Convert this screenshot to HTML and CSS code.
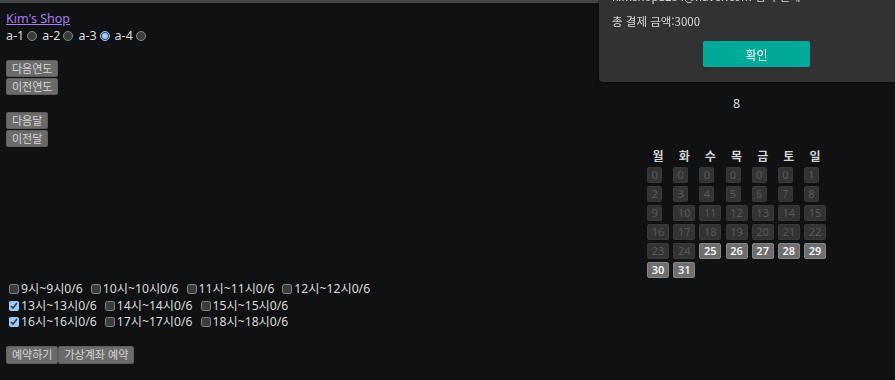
FILE: index.html
```html
<!DOCTYPE html>
<html lang="ko">
<head>
<meta charset="utf-8">
<title>Kim's Shop</title>
<link rel="stylesheet" href="styles.css">
</head>
<body>
<div class="topbar"></div>
<div class="page">
  <div class="left">
    <div class="line"><a class="shop-link" href="#">Kim's Shop</a></div>
    <div class="line radios">
      <label class="radio-item">a-1<input type="radio" name="a"></label>
      <label class="radio-item">a-2<input type="radio" name="a"></label>
      <label class="radio-item">a-3<input type="radio" name="a" checked></label>
      <label class="radio-item">a-4<input type="radio" name="a"></label>
    </div>
    <div class="btn-stack year">
      <button class="btn">다음연도</button>
      <button class="btn">이전연도</button>
    </div>
    <div class="btn-stack month">
      <button class="btn">다음달</button>
      <button class="btn">이전달</button>
    </div>
    <div class="slots">
      <div class="slot-row">
        <label class="slot"><input type="checkbox">9시~9시0/6</label>
        <label class="slot"><input type="checkbox">10시~10시0/6</label>
        <label class="slot"><input type="checkbox">11시~11시0/6</label>
        <label class="slot"><input type="checkbox">12시~12시0/6</label>
      </div>
      <div class="slot-row">
        <label class="slot"><input type="checkbox" checked>13시~13시0/6</label>
        <label class="slot"><input type="checkbox">14시~14시0/6</label>
        <label class="slot"><input type="checkbox">15시~15시0/6</label>
      </div>
      <div class="slot-row">
        <label class="slot"><input type="checkbox" checked>16시~16시0/6</label>
        <label class="slot"><input type="checkbox">17시~17시0/6</label>
        <label class="slot"><input type="checkbox">18시~18시0/6</label>
      </div>
    </div>
    <div class="reserve">
      <button class="btn">예약하기</button><button class="btn">가상계좌 예약</button>
    </div>
  </div>
  <div class="right">
    <div class="month-num">8</div>
    <div class="cal">
      <div class="dow">월</div><div class="dow">화</div><div class="dow">수</div><div class="dow">목</div><div class="dow">금</div><div class="dow">토</div><div class="dow">일</div>
      <button class="day one" disabled>0</button><button class="day one" disabled>0</button><button class="day one" disabled>0</button><button class="day one" disabled>0</button><button class="day one" disabled>0</button><button class="day one" disabled>0</button><button class="day one" disabled>1</button>
      <button class="day one" disabled>2</button><button class="day one" disabled>3</button><button class="day one" disabled>4</button><button class="day one" disabled>5</button><button class="day one" disabled>6</button><button class="day one" disabled>7</button><button class="day one" disabled>8</button>
      <button class="day one" disabled>9</button><button class="day" disabled>10</button><button class="day" disabled>11</button><button class="day" disabled>12</button><button class="day" disabled>13</button><button class="day" disabled>14</button><button class="day" disabled>15</button>
      <button class="day" disabled>16</button><button class="day" disabled>17</button><button class="day" disabled>18</button><button class="day" disabled>19</button><button class="day" disabled>20</button><button class="day" disabled>21</button><button class="day" disabled>22</button>
      <button class="day" disabled>23</button><button class="day" disabled>24</button><button class="day open">25</button><button class="day open">26</button><button class="day open">27</button><button class="day open">28</button><button class="day open">29</button>
      <button class="day open">30</button><button class="day open">31</button>
    </div>
  </div>
</div>
<div class="modal">
  <div class="modal-line cut">kimshop1234@naver.com 님의 결제</div>
  <div class="modal-line">총 결제 금액:3000</div>
  <button class="confirm">확인</button>
</div>
</body>
</html>
```
FILE: styles.css
```css
html {
  color-scheme: dark;
  background: #0f1113;
}
body {
  margin: 0;
  background: #0f1113;
  color: #dcdcdc;
  font-family: "Noto Sans", "Noto Sans CJK KR", sans-serif;
  font-size: 12.5px;
  line-height: 17px;
}
.topbar {
  height: 3px;
  background: #454545;
}
.page {
  display: flex;
  align-items: flex-start;
  padding-top: 7px;
}
.left {
  flex: 1;
  padding-left: 6px;
}
.line {
  height: 17px;
}
.shop-link {
  color: #a57df0;
}
.radios {
  display: flex;
  align-items: center;
}
.radio-item {
  display: inline-flex;
  align-items: center;
  margin-right: 5px;
}
.radio-item input {
  width: 10px;
  height: 10px;
  margin: 0 0 0 3px;
}
.btn-stack {
  display: flex;
  flex-direction: column;
  align-items: flex-start;
  gap: 1px;
}
.year { margin-top: 16px; }
.month { margin-top: 17px; }
.btn {
  font-family: "Noto Sans CJK KR", sans-serif;
  font-size: 11px;
  line-height: 13px;
  height: 17px;
  padding: 1px 5px;
  margin: 0;
  background: #6b6b6b;
  color: #d6d6d6;
  border: 1px solid #5c5c5c;
  border-radius: 2px;
}
.slots {
  margin-top: 134px;
}
.slot-row {
  display: flex;
  height: 16.5px;
  line-height: 16.5px;
  gap: 8px;
  padding-left: 3px;
  font-size: 12.2px;
}
.slot {
  display: inline-flex;
  align-items: center;
  gap: 2px;
}
.slot input {
  width: 10px;
  height: 10px;
  margin: 0;
}
.reserve {
  margin-top: 15px;
  display: flex;
}
.reserve .btn {
  height: 18px;
}
.right {
  width: 317px;
  display: flex;
  flex-direction: column;
  align-items: center;
}
.month-num {
  margin-top: 86px;
  line-height: 16px;
  font-size: 12.5px;
}
.cal {
  margin-top: 36px;
  display: grid;
  grid-template-columns: repeat(7, 22px);
  column-gap: 4.17px;
  row-gap: 3px;
  justify-items: start;
}
.dow {
  justify-self: center;
  font-family: "Noto Sans CJK KR", sans-serif;
  font-weight: bold;
  font-size: 12px;
  line-height: 16px;
  color: #d4d4d4;
}
.day {
  width: 22px;
  height: 16px;
  padding: 0;
  margin: 0;
  font-family: "Noto Sans", sans-serif;
  font-size: 11px;
  line-height: 14px;
  text-align: center;
  border-radius: 2px;
  border: 1px solid #393939;
  background: #333333;
  color: #5a5a5a;
}
.day.one {
  width: 15px;
}
.day.open {
  background: #6e6e6e;
  border-color: #858585;
  color: #f4f4f4;
  font-weight: 600;
}
.modal {
  position: fixed;
  top: -20px;
  right: -19px;
  width: 315px;
  box-sizing: border-box;
  padding: 8px 13px 15px;
  background: #323232;
  border-bottom-left-radius: 4px;
  box-shadow: 0 1px 3px rgba(0, 0, 0, 0.6);
  display: flex;
  flex-direction: column;
  color: #d8d8d8;
  font-family: "Noto Sans CJK KR", sans-serif;
  font-size: 11.5px;
}
.modal-line {
  line-height: 16px;
  height: 16px;
}
.modal-line.cut {
  margin-bottom: 9px;
}
.confirm {
  align-self: center;
  margin-top: 12px;
  width: 107px;
  height: 26px;
  border: 0;
  border-radius: 2px;
  background: #00a998;
  color: #ffffff;
  font-family: "Noto Sans CJK KR", sans-serif;
  font-size: 12px;
}
```
